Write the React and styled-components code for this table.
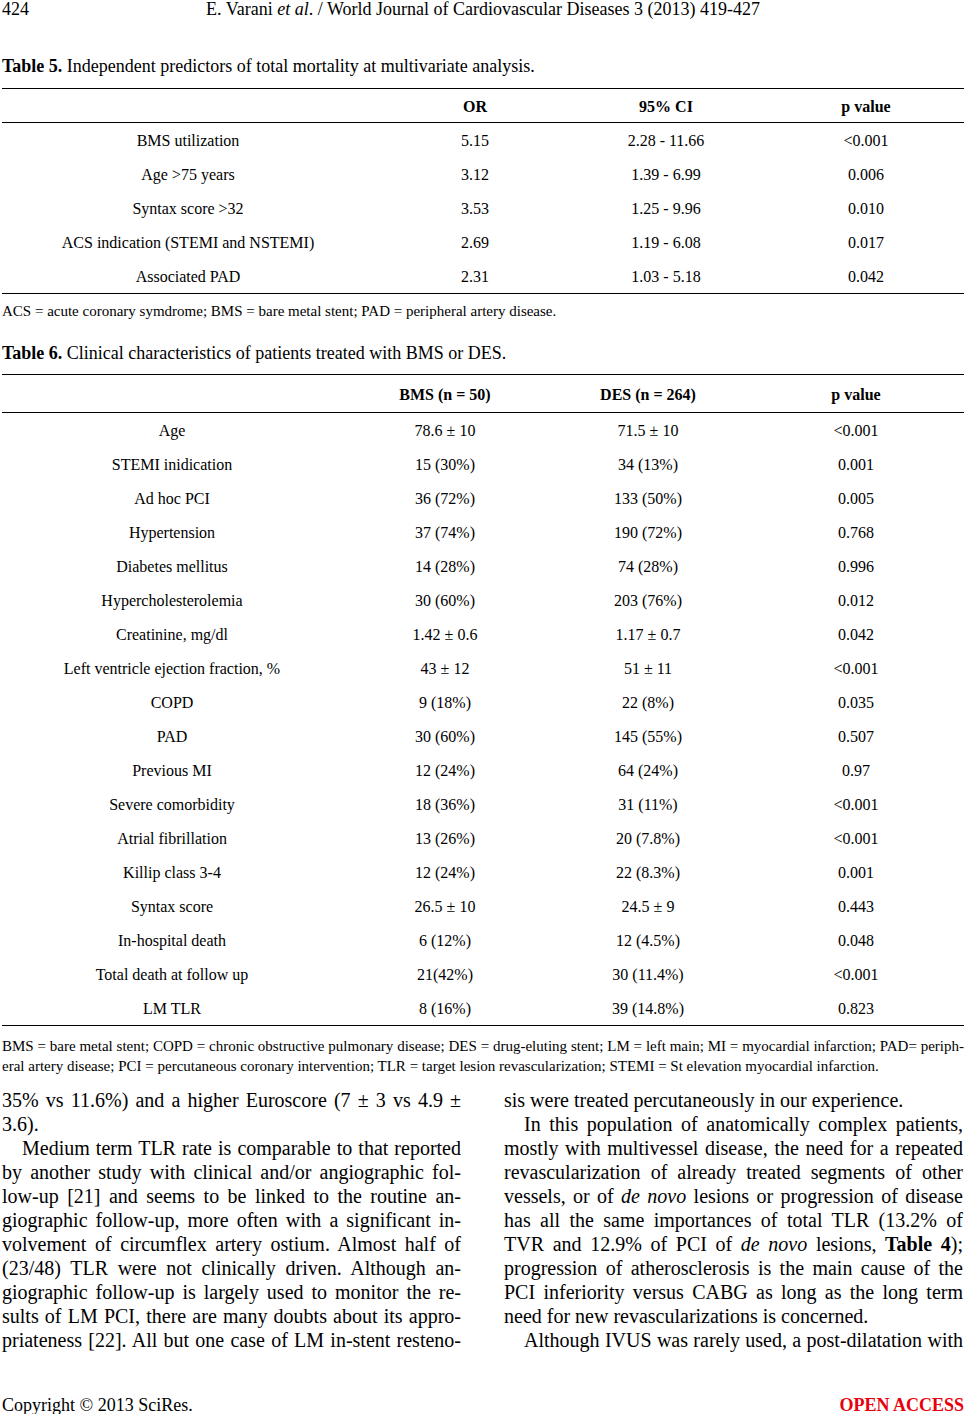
import React from "react";
import styled, { createGlobalStyle } from "styled-components";

const Global = createGlobalStyle`
  html, body { margin: 0; padding: 0; background: #fff; }
  body { font-family: "Liberation Serif", "Times New Roman", serif; color: #000; }
`;

const Page = styled.div`
  width: 962px;
  margin-left: 2px;
  display: flex;
  flex-direction: column;
`;

const RunningHead = styled.header`
  display: grid;
  grid-template-columns: 1fr auto 1fr;
  font-size: 18px;
  line-height: 18px;
`;

const PageNum = styled.span`
  justify-self: start;
`;

const Caption = styled.div`
  margin-top: ${(p) => p.$top}px;
  font-size: 18px;
  line-height: 20px;
  b { font-weight: bold; }
`;

const Table = styled.div`
  margin-top: ${(p) => p.$top}px;
  border-top: 1px solid #000;
  border-bottom: 1px solid #000;
  display: flex;
  flex-direction: column;
`;

const Row = styled.div`
  display: grid;
  grid-template-columns: ${(p) => p.$cols};
  height: ${(p) => p.$h}px;
  align-items: center;
  padding-top: ${(p) => (p.$head ? 2 : 1)}px;
  box-sizing: border-box;
  font-size: 16px;
  font-weight: ${(p) => (p.$head ? "bold" : "normal")};
  border-bottom: ${(p) => (p.$head ? "1px solid #000" : "none")};
  & > :last-child { padding-left: ${(p) => p.$lastPad || 0}px; }
`;

const Cell = styled.div`
  text-align: center;
  white-space: nowrap;
`;

const Note = styled.div`
  margin-top: ${(p) => p.$top}px;
  font-size: 15px;
  line-height: ${(p) => p.$lh}px;
`;

const NoteLine = styled.div`
  text-align: justify;
  text-align-last: ${(p) => (p.$end ? "left" : "justify")};
`;

const Body = styled.div`
  margin-top: ${(p) => p.$top}px;
  display: grid;
  grid-template-columns: 459px 459px;
  column-gap: 43px;
  font-size: 20px;
  line-height: 24px;
`;

const Column = styled.div`
  display: flex;
  flex-direction: column;
`;

const Line = styled.div`
  text-align: justify;
  text-align-last: ${(p) => (p.$end ? "left" : "justify")};
  padding-left: ${(p) => (p.$indent ? 20 : 0)}px;
`;

const Footer = styled.footer`
  margin-top: ${(p) => p.$top}px;
  display: flex;
  justify-content: space-between;
  align-items: baseline;
  font-size: 18px;
  line-height: 20px;
`;

const Open = styled.span`
  color: #e8000d;
  font-weight: bold;
  font-size: 18px;
`;

const T5_COLS = "372px 202px 180px 1fr";
const T6_COLS = "340px 206px 200px 1fr";

const t5 = [
  ["BMS utilization", "5.15", "2.28 - 11.66", "<0.001"],
  ["Age >75 years", "3.12", "1.39 - 6.99", "0.006"],
  ["Syntax score >32", "3.53", "1.25 - 9.96", "0.010"],
  ["ACS indication (STEMI and NSTEMI)", "2.69", "1.19 - 6.08", "0.017"],
  ["Associated PAD", "2.31", "1.03 - 5.18", "0.042"],
];

const t6 = [
  ["Age", "78.6 ± 10", "71.5 ± 10", "<0.001"],
  ["STEMI inidication", "15 (30%)", "34 (13%)", "0.001"],
  ["Ad hoc PCI", "36 (72%)", "133 (50%)", "0.005"],
  ["Hypertension", "37 (74%)", "190 (72%)", "0.768"],
  ["Diabetes mellitus", "14 (28%)", "74 (28%)", "0.996"],
  ["Hypercholesterolemia", "30 (60%)", "203 (76%)", "0.012"],
  ["Creatinine, mg/dl", "1.42 ± 0.6", "1.17 ± 0.7", "0.042"],
  ["Left ventricle ejection fraction, %", "43 ± 12", "51 ± 11", "<0.001"],
  ["COPD", "9 (18%)", "22 (8%)", "0.035"],
  ["PAD", "30 (60%)", "145 (55%)", "0.507"],
  ["Previous MI", "12 (24%)", "64 (24%)", "0.97"],
  ["Severe comorbidity", "18 (36%)", "31 (11%)", "<0.001"],
  ["Atrial fibrillation", "13 (26%)", "20 (7.8%)", "<0.001"],
  ["Killip class 3-4", "12 (24%)", "22 (8.3%)", "0.001"],
  ["Syntax score", "26.5 ± 10", "24.5 ± 9", "0.443"],
  ["In-hospital death", "6 (12%)", "12 (4.5%)", "0.048"],
  ["Total death at follow up", "21(42%)", "30 (11.4%)", "<0.001"],
  ["LM TLR", "8 (16%)", "39 (14.8%)", "0.823"],
];

const leftLines = [
  { t: "35% vs 11.6%) and a higher Euroscore (7 ± 3 vs 4.9 ±" },
  { t: "3.6).", end: true },
  { t: "Medium term TLR rate is comparable to that reported", indent: true },
  { t: "by another study with clinical and/or angiographic fol-" },
  { t: "low-up [21] and seems to be linked to the routine an-" },
  { t: "giographic follow-up, more often with a significant in-" },
  { t: "volvement of circumflex artery ostium. Almost half of" },
  { t: "(23/48) TLR were not clinically driven. Although an-" },
  { t: "giographic follow-up is largely used to monitor the re-" },
  { t: "sults of LM PCI, there are many doubts about its appro-" },
  { t: "priateness [22]. All but one case of LM in-stent resteno-" },
];

const rightLines = [
  { t: "sis were treated percutaneously in our experience.", end: true },
  { t: "In this population of anatomically complex patients,", indent: true },
  { t: "mostly with multivessel disease, the need for a repeated" },
  { t: "revascularization of already treated segments of other" },
  { t: <>vessels, or of <i>de novo</i> lesions or progression of disease</> },
  { t: "has all the same importances of total TLR (13.2% of" },
  { t: <>TVR and 12.9% of PCI of <i>de novo</i> lesions, <b>Table 4</b>);</> },
  { t: "progression of atherosclerosis is the main cause of the" },
  { t: "PCI inferiority versus CABG as long as the long term" },
  { t: "need for new revascularizations is concerned.", end: true },
  { t: "Although IVUS was rarely used, a post-dilatation with", indent: true },
];

function DataTable({ top, cols, head, headH, rows, lastPad }) {
  return (
    <Table $top={top}>
      <Row $cols={cols} $h={headH} $head $lastPad={lastPad}>
        {head.map((h, i) => (
          <Cell key={i}>{h}</Cell>
        ))}
      </Row>
      {rows.map((r, i) => (
        <Row key={i} $cols={cols} $h={34} $lastPad={lastPad}>
          {r.map((c, j) => (
            <Cell key={j}>{c}</Cell>
          ))}
        </Row>
      ))}
    </Table>
  );
}

export default function App() {
  return (
    <>
      <Global />
      <Page>
        <RunningHead>
          <PageNum>424</PageNum>
          <span>
            E. Varani <i>et al</i>. / World Journal of Cardiovascular Diseases 3 (2013) 419-427
          </span>
          <span />
        </RunningHead>

        <Caption $top={38}>
          <b>Table 5.</b> Independent predictors of total mortality at multivariate analysis.
        </Caption>
        <DataTable
          top={12}
          cols={T5_COLS}
          head={["", "OR", "95% CI", "p value"]}
          headH={34}
          rows={t5}
          lastPad={12}
        />
        <Note $top={8} $lh={18}>
          <NoteLine $end>
            ACS = acute coronary symdrome; BMS = bare metal stent; PAD = peripheral artery disease.
          </NoteLine>
        </Note>

        <Caption $top={23}>
          <b>Table 6.</b> Clinical characteristics of patients treated with BMS or DES.
        </Caption>
        <DataTable
          top={11}
          cols={T6_COLS}
          head={["", "BMS (n = 50)", "DES (n = 264)", "p value"]}
          headH={38}
          rows={t6}
          lastPad={0}
        />
        <Note $top={10} $lh={20}>
          <NoteLine>
            BMS = bare metal stent; COPD = chronic obstructive pulmonary disease; DES = drug-eluting stent; LM = left main; MI = myocardial infarction; PAD= periph-
          </NoteLine>
          <NoteLine $end>
            eral artery disease; PCI = percutaneous coronary intervention; TLR = target lesion revascularization; STEMI = St elevation myocardial infarction.
          </NoteLine>
        </Note>

        <Body $top={12}>
          <Column>
            {leftLines.map((l, i) => (
              <Line key={i} $end={l.end} $indent={l.indent}>
                {l.t}
              </Line>
            ))}
          </Column>
          <Column>
            {rightLines.map((l, i) => (
              <Line key={i} $end={l.end} $indent={l.indent}>
                {l.t}
              </Line>
            ))}
          </Column>
        </Body>

        <Footer $top={43}>
          <span>Copyright © 2013 SciRes.</span>
          <Open>OPEN ACCESS</Open>
        </Footer>
      </Page>
    </>
  );
}
